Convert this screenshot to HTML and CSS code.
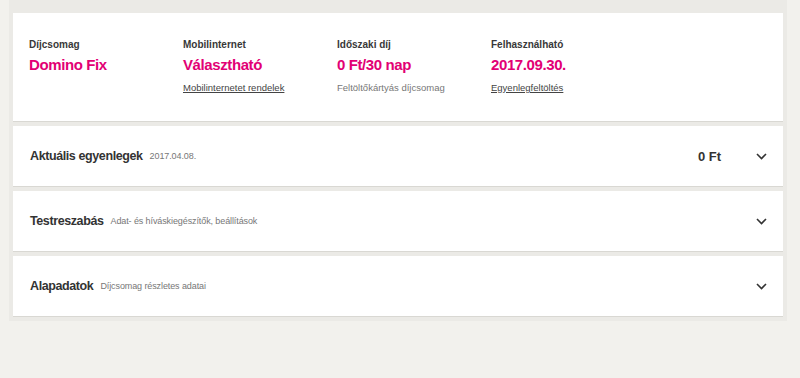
FILE: index.html
```html
<!DOCTYPE html>
<html lang="hu">
<head>
    <meta charset="UTF-8">
    <meta name="viewport" content="width=device-width, initial-scale=1.0">
    <title>Díjcsomag</title>
    <link rel="stylesheet" href="styles.css">
</head>
<body>
    <div class="wrapper">
        <div class="card summary">
            <div class="col">
                <div class="label">Díjcsomag</div>
                <div class="value">Domino Fix</div>
            </div>
            <div class="col">
                <div class="label">Mobilinternet</div>
                <div class="value">Választható</div>
                <a href="#" class="link">Mobilinternetet rendelek</a>
            </div>
            <div class="col">
                <div class="label">Időszaki díj</div>
                <div class="value">0 Ft/30 nap</div>
                <div class="note">Feltöltőkártyás díjcsomag</div>
            </div>
            <div class="col">
                <div class="label">Felhasználható</div>
                <div class="value">2017.09.30.</div>
                <a href="#" class="link">Egyenlegfeltöltés</a>
            </div>
        </div>

        <div class="card row">
            <span class="title">Aktuális egyenlegek</span>
            <span class="sub">2017.04.08.</span>
            <span class="amount">0 Ft</span>
            <svg class="chevron" width="11" height="7" viewBox="0 0 11 7"><path d="M1 1l4.5 4.5L10 1" fill="none" stroke="#333" stroke-width="1.6"/></svg>
        </div>
        <div class="card row">
            <span class="title">Testreszabás</span>
            <span class="sub">Adat- és híváskiegészítők, beállítások</span>
            <svg class="chevron push" width="11" height="7" viewBox="0 0 11 7"><path d="M1 1l4.5 4.5L10 1" fill="none" stroke="#333" stroke-width="1.6"/></svg>
        </div>
        <div class="card row">
            <span class="title">Alapadatok</span>
            <span class="sub">Díjcsomag részletes adatai</span>
            <svg class="chevron push" width="11" height="7" viewBox="0 0 11 7"><path d="M1 1l4.5 4.5L10 1" fill="none" stroke="#333" stroke-width="1.6"/></svg>
        </div>
    </div>
</body>
</html>
```

FILE: styles.css
```css
body {
    margin: 0;
    background-color: #f2f1ed;
    font-family: "Liberation Sans", Arial, sans-serif;
    color: #333;
}
.wrapper {
    margin-left: 9px;
    width: 770px;
    padding: 13px 4px 5px 4px;
    background-color: #ebeae6;
    display: flex;
    flex-direction: column;
    gap: 5px;
}
.card {
    background-color: #fff;
    box-shadow: 0 1px 0 #d9d8d3;
}
.summary {
    height: 108px;
    box-sizing: border-box;
    padding: 26px 16px 0 16px;
    display: flex;
}
.col {
    width: 154px;
}
.label {
    font-size: 10px;
    font-weight: bold;
    color: #383838;
    line-height: 12px;
}
.value {
    font-size: 15px;
    font-weight: bold;
    color: #e20074;
    letter-spacing: -0.4px;
    margin-top: 5px;
    line-height: 18px;
}
.link {
    display: inline-block;
    margin-top: 8px;
    font-size: 9.5px;
    color: #444;
    text-decoration: underline;
}
.note {
    margin-top: 8px;
    font-size: 9.5px;
    color: #777;
}
.row {
    height: 60px;
    box-sizing: border-box;
    padding: 0 16px 0 17px;
    display: flex;
    align-items: center;
}
.title {
    font-size: 12.5px;
    font-weight: bold;
    letter-spacing: -0.4px;
    color: #333;
}
.sub {
    margin-left: 7px;
    font-size: 9px;
    letter-spacing: -0.1px;
    color: #777;
}
.amount {
    margin-left: auto;
    margin-right: 35px;
    font-size: 13px;
    font-weight: bold;
    color: #333;
}
.push {
    margin-left: auto;
}
.chevron {
    display: block;
}
```
